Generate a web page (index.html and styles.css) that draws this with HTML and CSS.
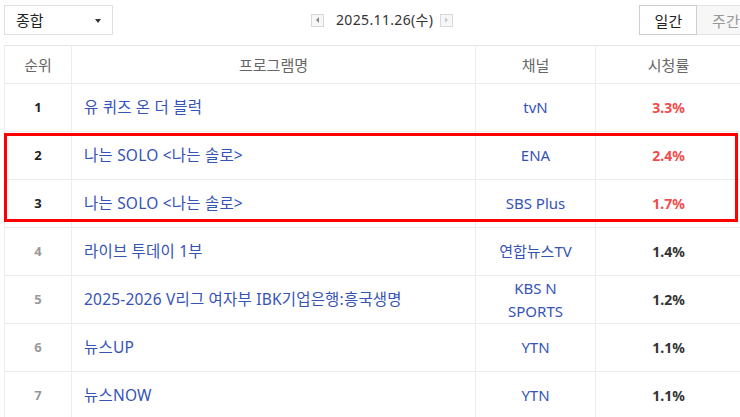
FILE: index.html
```html
<!DOCTYPE html>
<html lang="ko">
<head>
<meta charset="utf-8">
<title>시청률</title>
<link rel="stylesheet" href="styles.css">
</head>
<body>
<div class="page">
  <div class="topbar">
    <div class="select">
      <span class="select-label">종합</span>
      <span class="caret"></span>
    </div>
    <div class="datenav">
      <span class="navbtn"><span class="tri tri-left"></span></span>
      <span class="date">2025.11.26(수)</span>
      <span class="navbtn"><span class="tri tri-right"></span></span>
    </div>
    <div class="tabs">
      <span class="tab tab-on">일간</span>
      <span class="tab">주간</span>
    </div>
  </div>
  <div class="tablewrap">
    <table class="rank">
      <colgroup>
        <col class="c-rank"><col class="c-prog"><col class="c-ch"><col class="c-rate">
      </colgroup>
      <thead>
        <tr><th>순위</th><th>프로그램명</th><th>채널</th><th>시청률</th></tr>
      </thead>
      <tbody>
        <tr><td class="num top">1</td><td class="prog">유 퀴즈 온 더 블럭</td><td class="ch">tvN</td><td class="rate hot">3.3%</td></tr>
        <tr><td class="num top">2</td><td class="prog">나는 SOLO &lt;나는 솔로&gt;</td><td class="ch">ENA</td><td class="rate hot">2.4%</td></tr>
        <tr><td class="num top">3</td><td class="prog">나는 SOLO &lt;나는 솔로&gt;</td><td class="ch">SBS Plus</td><td class="rate hot">1.7%</td></tr>
        <tr><td class="num">4</td><td class="prog">라이브 투데이 1부</td><td class="ch">연합뉴스TV</td><td class="rate">1.4%</td></tr>
        <tr><td class="num">5</td><td class="prog">2025-2026 V리그 여자부 IBK기업은행:흥국생명</td><td class="ch">KBS N<br>SPORTS</td><td class="rate">1.2%</td></tr>
        <tr><td class="num">6</td><td class="prog">뉴스UP</td><td class="ch">YTN</td><td class="rate">1.1%</td></tr>
        <tr><td class="num">7</td><td class="prog">뉴스NOW</td><td class="ch">YTN</td><td class="rate">1.1%</td></tr>
      </tbody>
    </table>
    <div class="highlight"></div>
  </div>
</div>
</body>
</html>
```
FILE: styles.css
```css
html, body {
  margin: 0;
  padding: 0;
  background: #fff;
}
body {
  font-family: "Noto Sans", "Noto Sans CJK KR", sans-serif;
  font-size: 14px;
  color: #333;
  width: 740px;
  height: 417px;
  overflow: hidden;
}
.page {
  padding: 5px 0 0 4px;
}
.topbar {
  display: flex;
  align-items: center;
  height: 30px;
  margin-bottom: 10px;
  overflow: hidden;
}
.topbar > * {
  flex-shrink: 0;
}
.select {
  box-sizing: border-box;
  width: 109px;
  height: 30px;
  border: 1px solid #e0e0e0;
  display: flex;
  align-items: center;
  justify-content: space-between;
  padding: 0 11px 0 11px;
}
.select-label {
  font-size: 15px;
  color: #222;
  line-height: 20px;
}
.caret {
  width: 0;
  height: 0;
  border-left: 3px solid transparent;
  border-right: 3px solid transparent;
  border-top: 4px solid #333;
  margin-top: 1px;
}
.datenav {
  display: flex;
  align-items: center;
  margin-left: 198px;
}
.navbtn {
  box-sizing: border-box;
  width: 13px;
  height: 13px;
  border: 1px solid #d8d8d8;
  background: #f7f7f7;
  display: flex;
  align-items: center;
  justify-content: center;
  flex-shrink: 0;
}
.tri {
  width: 0;
  height: 0;
  border-top: 3px solid transparent;
  border-bottom: 3px solid transparent;
}
.tri-left {
  border-right: 3px solid #888;
}
.tri-right {
  border-left: 3px solid #ccc;
}
.date {
  font-size: 14px;
  letter-spacing: 0.35px;
  color: #333;
  line-height: 20px;
  margin: 0 7px 0 12px;
  white-space: nowrap;
}
.tabs {
  display: flex;
  margin-left: 186px;
}
.tab {
  box-sizing: border-box;
  width: 58px;
  height: 30px;
  display: flex;
  align-items: center;
  justify-content: center;
  font-size: 15px;
  color: #999;
  background: #f7f7f7;
  border: 1px solid #e3e3e3;
  border-left: 0;
  flex-shrink: 0;
}
.tab-on {
  color: #222;
  background: #fff;
  border: 1px solid #cfcfcf;
}
.tablewrap {
  position: relative;
}
.rank {
  border-collapse: collapse;
  table-layout: fixed;
  width: 737px;
}
.c-rank { width: 67px; }
.c-prog { width: 404px; }
.c-ch { width: 120px; }
.c-rate { width: 146px; }
.rank th,
.rank td {
  border: 1px solid #ececec;
  text-align: center;
  padding: 0;
}
.rank th {
  height: 37px;
  font-weight: normal;
  font-size: 15px;
  color: #666;
  background: #fff;
  border-top-color: #e4e4e4;
}
.rank td {
  height: 47px;
  line-height: 23px;
}
.num {
  font-weight: bold;
  color: #999;
  font-size: 13px;
}
.num.top {
  color: #222;
}
.prog {
  text-align: left !important;
  padding-left: 12px !important;
  font-size: 15.5px;
  letter-spacing: 0.2px;
  color: #3653b6;
}
.ch {
  font-size: 15px;
  color: #3653b6;
}
.rate {
  font-weight: bold;
  color: #333;
}
.rate.hot {
  color: #f24b4b;
}
.highlight {
  position: absolute;
  left: 0;
  top: 88px;
  width: 734px;
  height: 89px;
  box-sizing: border-box;
  border: 3px solid #f00;
  pointer-events: none;
}
```
